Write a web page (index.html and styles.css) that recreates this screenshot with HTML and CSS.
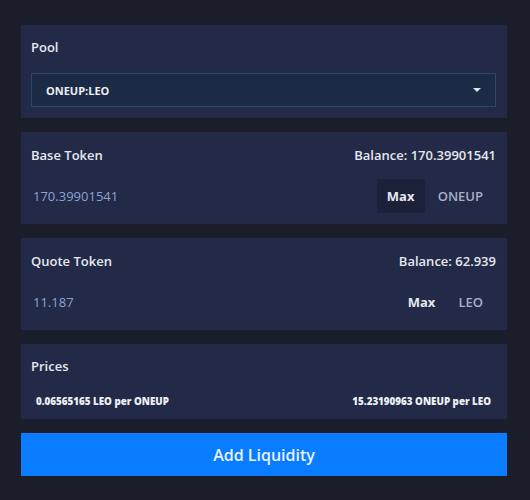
FILE: index.html
```html
<!DOCTYPE html>
<html lang="en">

<head>
  <meta charset="UTF-8">
  <meta name="viewport" content="width=device-width, initial-scale=1.0">
  <title>Add Liquidity</title>
  <link rel="stylesheet" href="styles.css">
</head>

<body>
  <div class="wrap">
    <div class="card pool">
      <div class="title">Pool</div>
      <div class="select">
        <span>ONEUP:LEO</span>
        <span class="caret"></span>
      </div>
    </div>

    <div class="card token">
      <div class="head">
        <div class="title">Base Token</div>
        <div class="balance">Balance: 170.39901541</div>
      </div>
      <div class="row">
        <input type="text" class="amount" value="170.39901541">
        <button class="max active">Max</button>
        <span class="symbol">ONEUP</span>
      </div>
    </div>

    <div class="card token">
      <div class="head">
        <div class="title">Quote Token</div>
        <div class="balance">Balance: 62.939</div>
      </div>
      <div class="row">
        <input type="text" class="amount" value="11.187">
        <button class="max">Max</button>
        <span class="symbol">LEO</span>
      </div>
    </div>

    <div class="card prices">
      <div class="title">Prices</div>
      <div class="price-row">
        <span>0.06565165 LEO per ONEUP</span>
        <span>15.23190963 ONEUP per LEO</span>
      </div>
    </div>

    <button class="add">Add Liquidity</button>
  </div>
</body>

</html>
```

FILE: styles.css
```css
* {
  margin: 0px;
  padding: 0px;
  box-sizing: border-box;
  font-family: "Open Sans", sans-serif;
}

body {
  background-color: #1b1e2a;
}

.wrap {
  width: 486px;
  margin-left: 21px;
  padding-top: 25px;
}

.card {
  background-color: #222a47;
  padding: 14px 11px 11px 10px;
  margin-bottom: 14px;
}

.title {
  font-size: 13px;
  font-weight: 600;
  line-height: 16px;
  color: #e6e8ef;
}

/* pool select */
.select {
  margin-top: 18px;
  height: 34px;
  display: flex;
  align-items: center;
  justify-content: space-between;
  padding: 0 14px 0 14px;
  background-color: #1c2b45;
  border: 1px solid #2f4862;
  font-size: 11px;
  font-weight: 700;
  color: #eef0f5;
}

.caret {
  width: 0;
  height: 0;
  border-left: 4px solid transparent;
  border-right: 4px solid transparent;
  border-top: 4px solid #dfe4ee;
}

/* token cards */
.token {
  padding-top: 15px;
}

.head {
  display: flex;
  justify-content: space-between;
}

.balance {
  font-size: 13px;
  font-weight: 600;
  line-height: 16px;
  color: #e6e8ef;
}

.row {
  margin-top: 16px;
  display: flex;
  align-items: center;
  height: 34px;
}

.amount {
  flex: 1;
  min-width: 0;
  background: none;
  border: none;
  outline: none;
  font-size: 13px;
  color: #8fa1d3;
  padding-left: 2px;
}

.max {
  width: 48px;
  height: 34px;
  border: none;
  background: none;
  font-size: 13px;
  font-weight: 700;
  color: #e6e8ef;
  cursor: pointer;
}

.max.active {
  background-color: #1a2139;
}

.symbol {
  padding: 0 13px;
  font-size: 13px;
  font-weight: 600;
  color: #a9b0c5;
}

/* prices */
.prices {
  padding-top: 14px;
  padding-bottom: 11px;
}

.price-row {
  margin-top: 22px;
  display: flex;
  justify-content: space-between;
  padding: 0 5px 0 5px;
  font-size: 9.8px;
  font-weight: 800;
  color: #eef0f5;
  line-height: 12px;
}

.add {
  width: 486px;
  height: 43px;
  border: none;
  background-color: #0a7cff;
  font-size: 16px;
  font-weight: 600;
  color: #e8f1ff;
  cursor: pointer;
}

.add:hover {
  background-color: #0068e0;
}
```
